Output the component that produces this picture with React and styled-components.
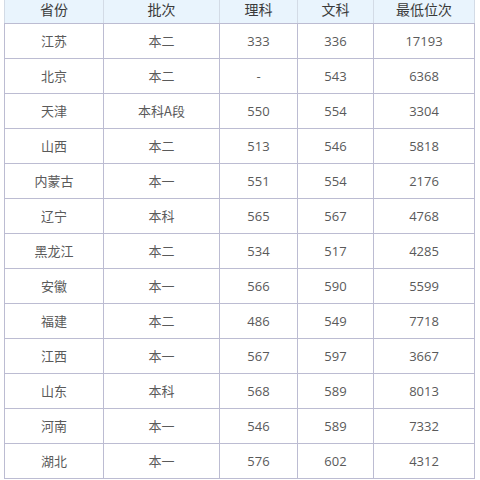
import React from 'react'
import styled, { createGlobalStyle } from 'styled-components'

const GlobalStyle = createGlobalStyle`
    html, body {
        margin: 0;
        padding: 0;
        background: #ffffff;
    }
    body {
        font-family: "Noto Sans CJK SC", "Open Sans", sans-serif;
    }
`

const lineColor = '#bcbcd2'

const Wrapper = styled.div`
    padding: 0 6px 0 4px;
    height: 480px;
    overflow: hidden;
`

const Table = styled.table`
    width: 470px;
    border-collapse: collapse;
    table-layout: fixed;
`

const HeadCell = styled.th`
    background-color: #e9f4fd;
    color: #3a3a3a;
    font-weight: 400;
    font-size: 14px;
    height: 19px;
    padding: 0 0 4px;
    line-height: 19px;
    text-align: center;
    border-left: 1px solid #d3dbe6;
    border-right: 1px solid #d3dbe6;
    border-bottom: 1px solid ${lineColor};
`

const Cell = styled.td`
    color: #5a5a5a;
    font-size: 13px;
    height: 34px;
    padding: 0;
    line-height: 18px;
    text-align: center;
    border: 1px solid ${lineColor};
    font-family: ${props => props.num ? '"Open Sans", "Noto Sans CJK SC", sans-serif' : '"Noto Sans CJK SC", sans-serif'};
`

const columns = [
    { title: '省份', width: 99 },
    { title: '批次', width: 116 },
    { title: '理科', width: 78 },
    { title: '文科', width: 76 },
    { title: '最低位次', width: 101 },
]

const rows = [
    ['江苏', '本二', '333', '336', '17193'],
    ['北京', '本二', '-', '543', '6368'],
    ['天津', '本科A段', '550', '554', '3304'],
    ['山西', '本二', '513', '546', '5818'],
    ['内蒙古', '本一', '551', '554', '2176'],
    ['辽宁', '本科', '565', '567', '4768'],
    ['黑龙江', '本二', '534', '517', '4285'],
    ['安徽', '本一', '566', '590', '5599'],
    ['福建', '本二', '486', '549', '7718'],
    ['江西', '本一', '567', '597', '3667'],
    ['山东', '本科', '568', '589', '8013'],
    ['河南', '本一', '546', '589', '7332'],
    ['湖北', '本一', '576', '602', '4312'],
]

const App = () => {
  return (
    <Wrapper>
        <GlobalStyle />
        <Table>
            <colgroup>
                {columns.map(c => <col key={c.title} style={{ width: c.width }} />)}
            </colgroup>
            <thead>
                <tr>
                    {columns.map(c => <HeadCell key={c.title}>{c.title}</HeadCell>)}
                </tr>
            </thead>
            <tbody>
                {rows.map(r => (
                    <tr key={r[0]}>
                        {r.map((v, i) => <Cell key={i} num={i > 1}>{v}</Cell>)}
                    </tr>
                ))}
            </tbody>
        </Table>
    </Wrapper>
  )
}

export default App
